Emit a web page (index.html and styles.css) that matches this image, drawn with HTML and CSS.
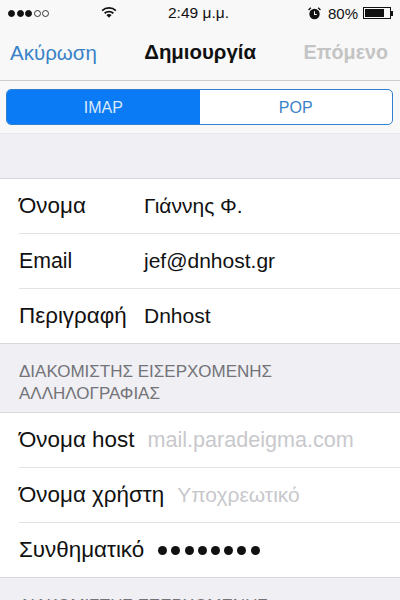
FILE: index.html
```html
<!DOCTYPE html>
<html lang="el">
<head>
<meta charset="utf-8">
<title>Δημιουργία</title>
<link rel="stylesheet" href="styles.css">
</head>
<body>
<div class="screen">
  <header class="top">
    <div class="status">
      <div class="signal"><i class="dot on"></i><i class="dot on"></i><i class="dot on"></i><i class="dot"></i><i class="dot"></i></div>
      <svg class="wifi" viewBox="0 0 16 12" width="16" height="12"><path d="M0.5 4 A11 11 0 0 1 15.5 4 L14.3 5.3 A9.2 9.2 0 0 0 1.7 5.3 Z" fill="#111"/><path d="M3 6.6 A7.4 7.4 0 0 1 13 6.6 L11.8 7.9 A5.6 5.6 0 0 0 4.2 7.9 Z" fill="#111"/><path d="M5.4 9.1 A4 4 0 0 1 10.6 9.1 L8 11.8 Z" fill="#111"/></svg>
      <div class="time">2:49 μ.μ.</div>
      <div class="status-right">
        <svg class="alarm" viewBox="0 0 14 14" width="13" height="13"><circle cx="7" cy="7.5" r="5.6" fill="#111"/><path d="M7 4.5V8H9.5" stroke="#fff" stroke-width="1.1" fill="none"/><path d="M0.6 3.2L3 0.8M13.4 3.2L11 0.8" stroke="#111" stroke-width="1.5"/></svg>
        <span class="pct">80%</span>
        <div class="battery"><div class="battery-level"></div></div><div class="battery-tip"></div>
      </div>
    </div>
    <nav class="nav">
      <span class="nav-btn cancel">Ακύρωση</span>
      <span class="nav-title">Δημιουργία</span>
      <span class="nav-btn next">Επόμενο</span>
    </nav>
  </header>
  <div class="seg-bar">
    <div class="seg">
      <div class="seg-item active">IMAP</div>
      <div class="seg-item">POP</div>
    </div>
  </div>
  <div class="spacer"></div>
  <section class="group">
    <div class="row"><span class="label fixed">Όνομα</span><span class="value">Γιάννης Φ.</span></div>
    <div class="row"><span class="label fixed latin">Email</span><span class="value">jef@dnhost.gr</span></div>
    <div class="row"><span class="label fixed">Περιγραφή</span><span class="value">Dnhost</span></div>
  </section>
  <h2 class="section-title">ΔΙΑΚΟΜΙΣΤΗΣ ΕΙΣΕΡΧΟΜΕΝΗΣ ΑΛΛΗΛΟΓΡΑΦΙΑΣ</h2>
  <section class="group">
    <div class="row"><span class="label">Όνομα host</span><span class="value ph">mail.paradeigma.com</span></div>
    <div class="row"><span class="label">Όνομα χρήστη</span><span class="value ph greek">Υποχρεωτικό</span></div>
    <div class="row"><span class="label">Συνθηματικό</span><span class="value dots"><i></i><i></i><i></i><i></i><i></i><i></i><i></i><i></i></span></div>
  </section>
  <h2 class="section-title">ΔΙΑΚΟΜΙΣΤΗΣ ΕΞΕΡΧΟΜΕΝΗΣ</h2>
</div>
</body>
</html>
```
FILE: styles.css
```css
* { box-sizing: border-box; }
html, body { margin: 0; padding: 0; }
body { font-family: "Liberation Sans", Arial, sans-serif; background: #efeff4; }
.screen { width: 400px; height: 600px; overflow: hidden; background: #efeff4; color: #111; }
.top { height: 81px; background: #f8f8f8; border-bottom: 1px solid #cfcdcf; }
.status { display: flex; align-items: center; height: 26px; padding: 0 7px 0 8px; font-size: 15px; }
.signal { display: flex; gap: 1.5px; }
.dot { width: 7px; height: 7px; border-radius: 50%; border: 1px solid #333; }
.dot.on { background: #111; border-color: #111; }
.wifi { margin-left: 52px; margin-top: -2px; }
.time { margin-left: 51px; font-size: 15.5px; white-space: nowrap; }
.status-right { display: flex; align-items: center; margin-left: auto; }
.alarm { margin-right: 7px; }
.pct { font-size: 15px; margin-right: 5px; }
.battery { width: 28px; height: 12px; border: 1px solid #111; padding: 1px; }
.battery-level { width: 80%; height: 100%; background: #111; }
.battery-tip { width: 2px; height: 5px; background: #111; }
.nav { display: flex; align-items: center; justify-content: space-between; height: 53px; padding: 0 12px 0 10px; font-size: 20.5px; }
.cancel { color: #3a82c8; }
.next { color: #c4c4c4; font-weight: 700; font-size: 19.7px; }
.nav-title { font-weight: 700; font-size: 20.4px; margin-left: 7px; margin-right: 7px; }
.seg-bar { height: 53px; padding: 8px 7px 0 6px; background: #f8f8f8; border-bottom: 1px solid #eaeaec; }
.seg { display: flex; height: 36px; border: 1.5px solid #3080d0; border-radius: 5px; background: #fff; overflow: hidden; }
.seg-item { flex: 1; display: flex; align-items: center; justify-content: center; padding-top: 1px; font-size: 16px; color: #3a82c8; }
.seg-item.active { background: #0a7bf5; color: #dbe9f8; }
.spacer { height: 44px; }
.group { background: #fff; border-top: 1px solid #d8d8da; border-bottom: 1px solid #d8d8da; padding-left: 19px; }
.row { display: flex; align-items: center; height: 55px; font-size: 21px; white-space: nowrap; border-bottom: 1px solid #e2e2e4; }
.row:last-child { border-bottom: 0; height: 54px; }
.label { margin-right: 13px; font-size: 22.4px; }
.label.latin { font-size: 21.3px; }
.label.fixed { flex: 0 0 125px; margin-right: 0; }
.ph { color: #c8c8cc; font-size: 21.6px; }
.ph.greek { font-size: 21px; }
.dots { display: flex; gap: 4.2px; margin-left: 1px; }
.dots i { width: 9px; height: 9px; border-radius: 50%; background: #111; }
.section-title { margin: 0; height: 68px; padding: 17px 19px 0; font-size: 17px; font-weight: 400; line-height: 22px; color: #737378; width: 340px; }
```
